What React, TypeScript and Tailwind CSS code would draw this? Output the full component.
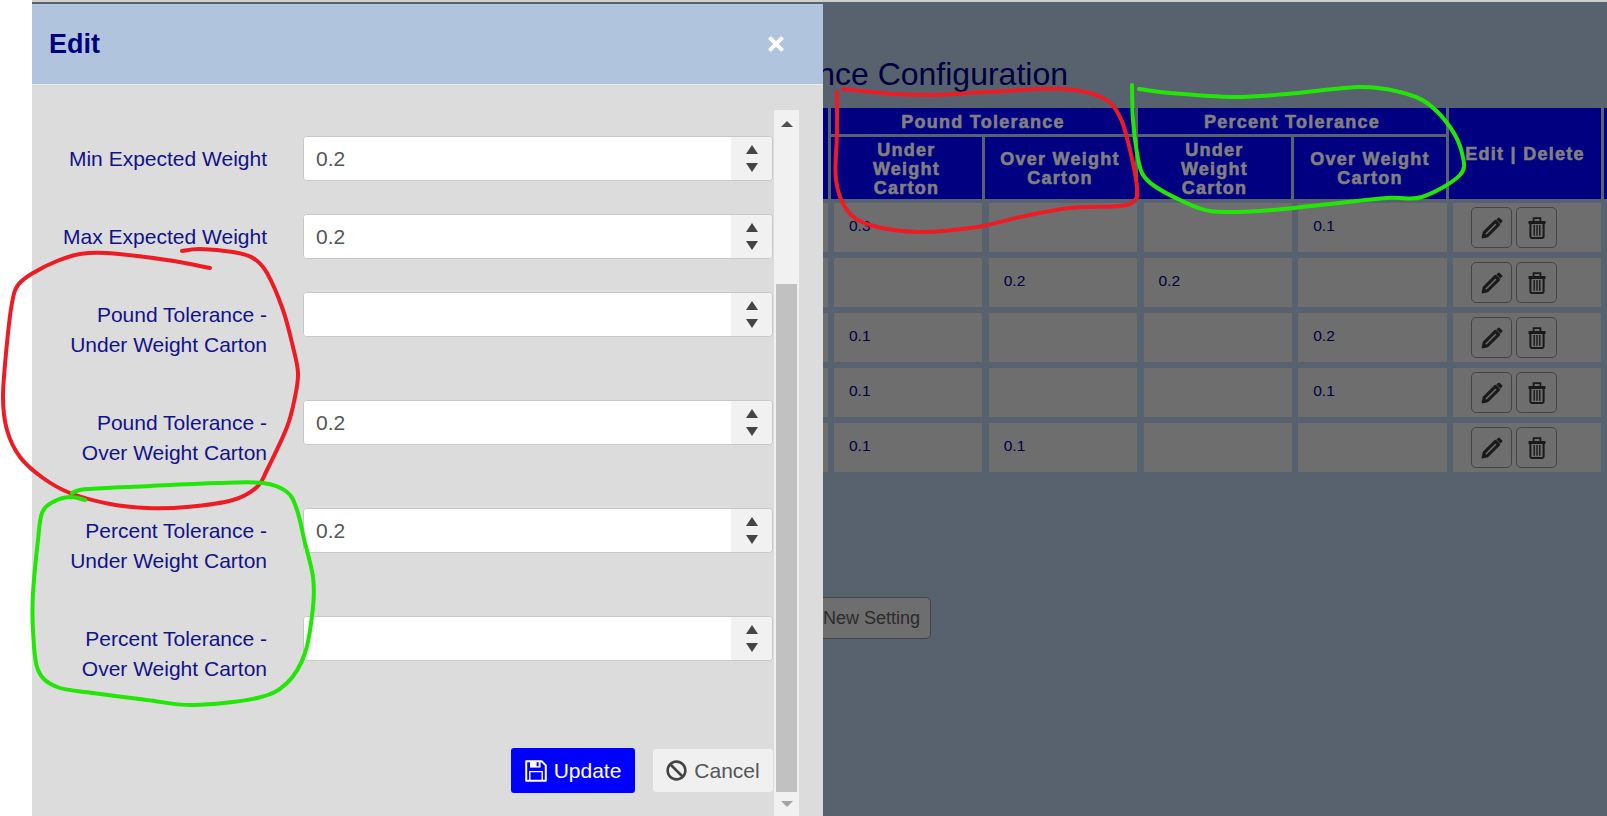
import React from "react";
import { FaBan } from "react-icons/fa";

type Pt = [number, number];

function smooth(points: Pt[]): string {
  let d = `M${points[0][0]} ${points[0][1]}`;
  for (let i = 0; i < points.length - 1; i++) {
    const p0 = points[Math.max(i - 1, 0)];
    const p1 = points[i];
    const p2 = points[i + 1];
    const p3 = points[Math.min(i + 2, points.length - 1)];
    const c1x = p1[0] + (p2[0] - p0[0]) / 6;
    const c1y = p1[1] + (p2[1] - p0[1]) / 6;
    const c2x = p2[0] - (p3[0] - p1[0]) / 6;
    const c2y = p2[1] - (p3[1] - p1[1]) / 6;
    d += ` C${c1x} ${c1y} ${c2x} ${c2y} ${p2[0]} ${p2[1]}`;
  }
  return d;
}

const redForm: Pt[] = [[210,268],[167,260],[107,253],[80,254],[57,261],[33,273],[18,285],[12,303],[7,343],[3,397],[7,430],[20,457],[43,478],[70,493],[110,504],[147,508],[187,507],[233,500],[257,487],[267,470],[287,427],[295,397],[298,373],[293,347],[283,310],[267,273],[253,258],[233,252],[200,249],[182,251]];
const greenForm: Pt[] = [[72,493],[87,489],[150,486],[217,483],[263,483],[287,492],[297,510],[305,543],[313,577],[313,607],[305,653],[287,683],[257,698],[193,705],[147,700],[93,693],[57,687],[38,670],[33,630],[33,593],[38,540],[42,513],[53,502],[70,497],[85,500]];
const redTable: Pt[] = [[837,92],[837,133],[836,180],[847,210],[870,225],[920,232],[977,227],[1020,217],[1070,208],[1120,206],[1135,200],[1137,187],[1130,150],[1120,117],[1103,98],[1063,89],[987,92],[937,95],[893,94],[843,89]];
const greenTable: Pt[] = [[1132,85],[1133,120],[1137,153],[1142,173],[1153,185],[1180,200],[1210,211],[1260,211],[1320,205],[1387,198],[1422,197],[1460,175],[1462,153],[1450,127],[1427,103],[1400,92],[1360,87],[1287,94],[1233,97],[1170,93],[1139,89]];

const rows = [
  ["0.3", "", "", "0.1"],
  ["", "0.2", "0.2", ""],
  ["0.1", "", "", "0.2"],
  ["0.1", "", "", "0.1"],
  ["0.1", "0.1", "", ""],
];

function Pencil() {
  return (
    <svg width="22" height="22" viewBox="0 0 22 22" className="text-[#1a1a1a]">
      <path d="M14.4 4.4 17.6 7.6 6.4 18.8 2.2 19.8 3.2 15.6Z" fill="none" stroke="currentColor" strokeWidth="3" strokeLinejoin="round" />
      <path d="M2.8 15.4 6.6 19.2 0.6 21.4Z" fill="currentColor" />
      <path d="M15.4 2.6 17 1a1.3 1.3 0 0 1 1.8 0L21 3.2a1.3 1.3 0 0 1 0 1.8L19.4 6.6Z" fill="currentColor" />
    </svg>
  );
}

function Trash() {
  return (
    <svg width="18" height="22" viewBox="0 0 18 22" className="text-[#1a1a1a]">
      <path d="M5.6 4V1.2h6.8V4" fill="none" stroke="currentColor" strokeWidth="1.8" />
      <rect x="0.5" y="4" width="17" height="3" fill="currentColor" />
      <path d="M2.4 6v13.6a1.4 1.4 0 0 0 1.4 1.4h10.4a1.4 1.4 0 0 0 1.4-1.4V6" fill="none" stroke="currentColor" strokeWidth="2" />
      <path d="M6.2 8v10.8M9 8v10.8M11.8 8v10.8" stroke="currentColor" strokeWidth="1.4" />
    </svg>
  );
}

function Floppy() {
  return (
    <svg width="22" height="22" viewBox="0 0 22 22" fill="none">
      <path d="M1.2 1.2H16.6L20.8 5.4V20.8H1.2Z" stroke="#fff" strokeWidth="2" strokeLinejoin="round" />
      <path d="M5 1H15.6V7.6H5Z" fill="#fff" />
      <rect x="11.6" y="2.2" width="2" height="4" fill="#0000ff" />
      <path d="M4.8 20.5V11.6H17.2V20.5" stroke="#fff" strokeWidth="1.4" />
    </svg>
  );
}

function HeadCell({ children, className }: { children: React.ReactNode; className: string }) {
  return (
    <div className={`flex shrink-0 items-center justify-center bg-[#000080] pt-[2px] text-center text-[18px] leading-[19px] font-bold tracking-[1.25px] text-[#808080] [-webkit-text-stroke:0.6px_#808080] ${className}`}>
      {children}
    </div>
  );
}

function Cell({ value }: { value: string }) {
  return (
    <div className="flex h-full w-[148.25px] shrink-0 items-center bg-[#6e6e6e] pb-[3px] pl-[15px] text-[15.5px] text-[#000040]">
      {value}
    </div>
  );
}

function ActionButton({ children }: { children: React.ReactNode }) {
  return (
    <div className="flex h-[41px] w-[41px] items-center justify-center rounded-[5px] border border-[#444] bg-[#6e6e6e]">
      {children}
    </div>
  );
}

function Spinner() {
  return (
    <div className="flex w-[41px] shrink-0 flex-col items-center justify-center gap-[9px] rounded-r-[3px] bg-[#f1f1f1]">
      <svg width="12" height="9" viewBox="0 0 12 9"><path d="M6 0 12 9H0Z" fill="#444" /></svg>
      <svg width="12" height="9" viewBox="0 0 12 9"><path d="M0 0H12L6 9Z" fill="#444" /></svg>
    </div>
  );
}

function Field({ label, value, rowClass }: { label: React.ReactNode; value: string; rowClass: string }) {
  return (
    <div className={`flex items-start ${rowClass}`}>
      <div className="w-[235px] shrink-0 pt-[8px] text-right text-[21px] leading-[30px] text-[#12128a]">{label}</div>
      <div className="ml-[36px] flex h-[45px] w-[470px] overflow-hidden rounded-[4px] border border-[#c8c8c8] bg-white">
        <input
          readOnly
          value={value}
          className="min-w-0 flex-1 bg-white pl-[12px] text-[21px] text-[#555] outline-none"
        />
        <Spinner />
      </div>
    </div>
  );
}

export default function App() {
  return (
    <div className="relative h-[816px] w-[1607px] overflow-hidden bg-white font-['Liberation_Sans',Arial,sans-serif]">
      <div className="ml-[32px] h-[2px] bg-[#cfcfcf]" />
      {/* Dimmed page behind the dialog */}
      <div className="ml-[32px] h-[814px] overflow-hidden bg-[#58626f]">
        <h1 className="ml-[-32px] h-[106px] w-[1068px] pt-[52px] text-right text-[32px] leading-[40px] text-[#000040]">
          Tolerance Configuration
        </h1>
        <div className="ml-[28px] w-[1700px]">
          {/* Table head */}
          <div className="flex h-[91px] gap-[3px]">
            <HeadCell className="w-[768px]">{""}</HeadCell>
            <div className="flex w-[304px] shrink-0 flex-col gap-[3px]">
              <HeadCell className="h-[26px]">Pound Tolerance</HeadCell>
              <div className="flex flex-1 gap-[3px]">
                <HeadCell className="w-[151px]">Under<br />Weight<br />Carton</HeadCell>
                <HeadCell className="flex-1">Over Weight<br />Carton</HeadCell>
              </div>
            </div>
            <div className="flex w-[308px] shrink-0 flex-col gap-[3px]">
              <HeadCell className="h-[26px]">Percent Tolerance</HeadCell>
              <div className="flex flex-1 gap-[3px]">
                <HeadCell className="w-[153px]">Under<br />Weight<br />Carton</HeadCell>
                <HeadCell className="flex-1">Over Weight<br />Carton</HeadCell>
              </div>
            </div>
            <HeadCell className="w-[152px]">Edit | Delete</HeadCell>
            <HeadCell className="w-[60px]">{""}</HeadCell>
          </div>
          {/* Table body */}
          <div className="mt-[4px] flex flex-col gap-[6px]">
            {rows.map((row, i) => (
              <div key={i} className="flex h-[49px] gap-[6.5px]">
                <div className="h-full w-[768px] shrink-0 bg-[#6e6e6e]" />
                <div className="ml-[-0.5px] flex h-full gap-[6.5px]">
                  {row.map((value, j) => (
                    <Cell key={j} value={value} />
                  ))}
                  <div className="flex h-full w-[148.25px] shrink-0 items-center gap-[4px] bg-[#6e6e6e] pl-[18px]">
                    <ActionButton><Pencil /></ActionButton>
                    <ActionButton><Trash /></ActionButton>
                  </div>
                </div>
              </div>
            ))}
          </div>
        </div>
        <div className="ml-[668px] mt-[125px] flex h-[42px] w-[231px] items-center justify-end rounded-[5px] border border-[#444] bg-[#6e6e6e] pr-[10px] text-[18px] text-[#2b2b2b]">
          Add New Setting
        </div>
      </div>

      {/* Dialog */}
      <div className="absolute left-[32px] top-[4px] flex h-[812px] w-[791px] flex-col bg-[#dcdcdc]">
        <div className="flex h-[81px] shrink-0 items-center justify-between border-b border-[#e8edf4] bg-[#b0c4de] pl-[17px] pr-[39px]">
          <span className="text-[27px] font-bold text-[#000080]">Edit</span>
          <svg width="16" height="16" viewBox="0 0 16 16" stroke="#fff" strokeWidth="3.8">
            <path d="M1.4 1.4 14.6 14.6M14.6 1.4 1.4 14.6" />
          </svg>
        </div>
        <div className="flex min-h-0 flex-1">
          <div className="w-[742px] shrink-0 pt-[51px]">
            <Field label="Min Expected Weight" value="0.2" rowClass="h-[78px]" />
            <Field label="Max Expected Weight" value="0.2" rowClass="h-[78px]" />
            <Field label={<>Pound Tolerance -<br />Under Weight Carton</>} value="" rowClass="h-[108px]" />
            <Field label={<>Pound Tolerance -<br />Over Weight Carton</>} value="0.2" rowClass="h-[108px]" />
            <Field label={<>Percent Tolerance -<br />Under Weight Carton</>} value="0.2" rowClass="h-[108px]" />
            <Field label={<>Percent Tolerance -<br />Over Weight Carton</>} value="" rowClass="h-[108px]" />
            <div className="mt-[24px] flex items-center justify-end gap-[18px] pr-[1px]">
              <button className="flex h-[45px] w-[124px] items-center justify-center gap-[7px] rounded-[3px] bg-[#0000ff] text-[21px] text-white">
                <Floppy />
                Update
              </button>
              <button className="flex h-[43px] w-[120px] items-center justify-center gap-[7px] rounded-[3px] bg-[#f0f0f0] text-[21px] text-[#555]">
                <FaBan size={21} className="text-[#444]" />
                Cancel
              </button>
            </div>
          </div>
          {/* Scrollbar */}
          <div className="mt-[25px] flex w-[25px] shrink-0 flex-col items-center bg-[#f1f1f1]">
            <div className="flex h-[27px] w-full shrink-0 items-center justify-center">
              <svg width="12" height="6" viewBox="0 0 12 6"><path d="M6 0 12 6H0Z" fill="#505050" /></svg>
            </div>
            <div className="mt-[147px] h-[508px] w-[21px] shrink-0 bg-[#c1c1c1]" />
            <div className="flex flex-1 items-center justify-center">
              <svg width="12" height="6" viewBox="0 0 12 6"><path d="M0 0H12L6 6Z" fill="#a3a3a3" /></svg>
            </div>
          </div>
        </div>
      </div>

      {/* Hand-drawn annotations */}
      <svg className="pointer-events-none absolute left-0 top-0" width="1607" height="816" viewBox="0 0 1607 816" fill="none" strokeLinecap="round" strokeLinejoin="round" strokeWidth="4">
        <path d={smooth(redForm)} stroke="#ed1c24" />
        <path d={smooth(redTable)} stroke="#ed1c24" />
        <path d={smooth(greenForm)} stroke="#22e606" />
        <path d={smooth(greenTable)} stroke="#22e606" />
      </svg>
    </div>
  );
}
